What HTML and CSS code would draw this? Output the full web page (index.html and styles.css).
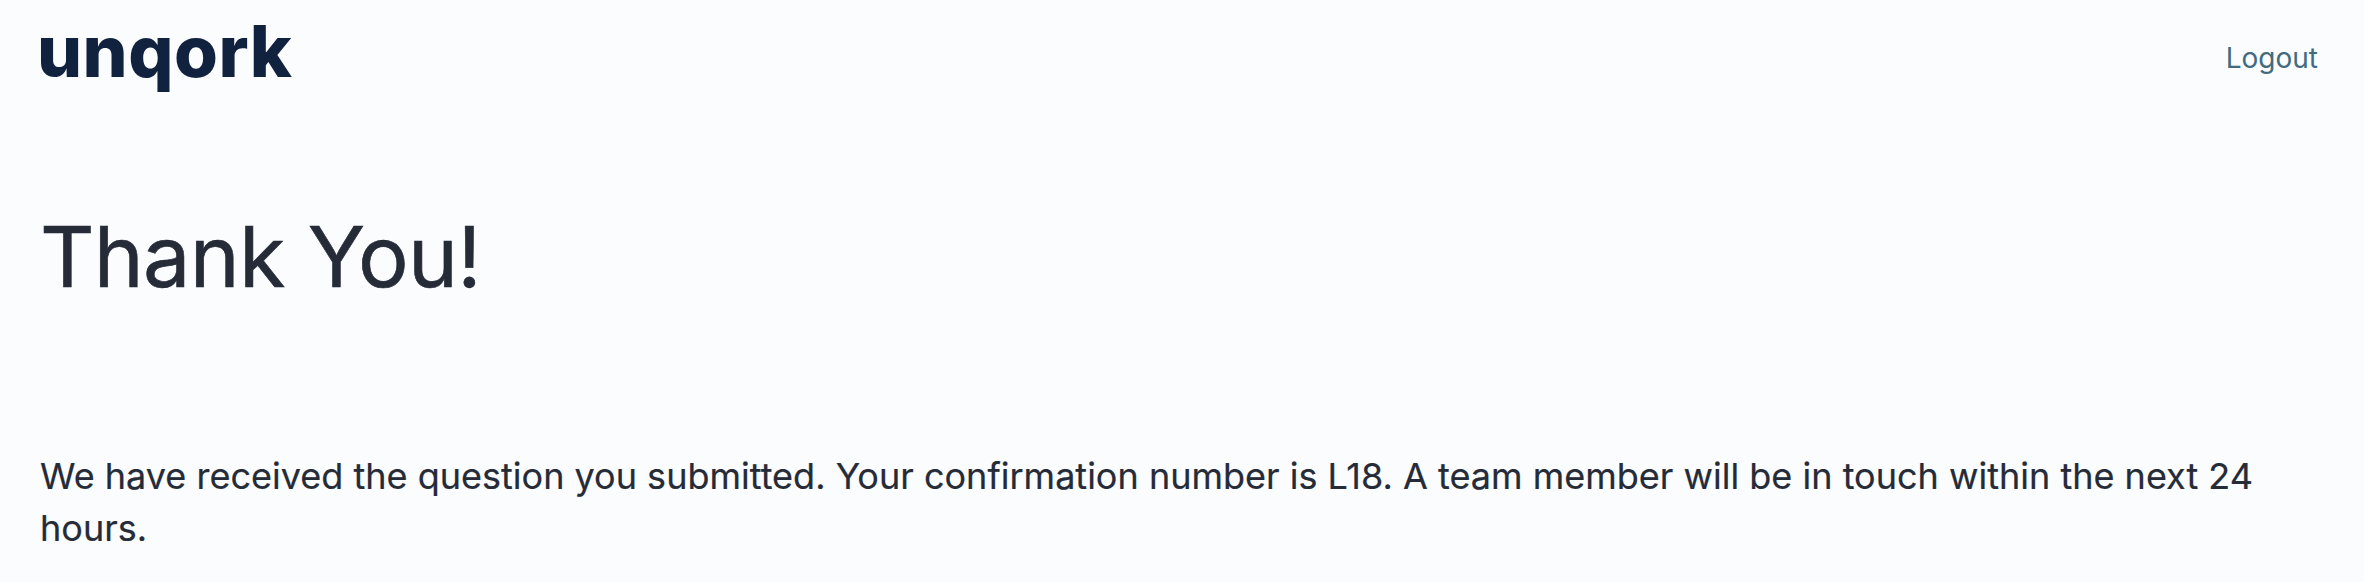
FILE: index.html
```html
<!DOCTYPE html>
<html lang="en">
<head>
<meta charset="utf-8">
<title>Thank You</title>
<link rel="stylesheet" href="styles.css">
</head>
<body>
<header class="header">
<span class="logo">unqork</span>
<a class="logout">Logout</a>
</header>
<main class="content">
<h1 class="title">Thank You!</h1>
<p class="message">We have received the question you submitted. Your confirmation number is L18. A team member will be in touch within the next 24 hours.</p>
</main>
</body>
</html>
```
FILE: styles.css
```css
body { margin: 0; background: #fafcfe; font-family: Inter, sans-serif; color: #262b38; }
.header { display: flex; justify-content: space-between; height: 116px; padding: 0 46px 0 37px; box-sizing: border-box; }
.logo { font-size: 71px; font-weight: 800; line-height: 102px; letter-spacing: 0.5px; color: #11223f; }
.logout { font-size: 28px; line-height: 116px; color: #426b80; }
.content { padding: 82px 40px 0; }
.title { margin: 0; font-size: 84.5px; font-weight: 400; line-height: 116px; letter-spacing: -0.7px; -webkit-text-stroke: 0.6px currentColor; }
.message { margin: 136px 0 0; font-size: 36px; line-height: 52px; letter-spacing: 0.01px; font-feature-settings: "calt" 0; -webkit-text-stroke: 0.2px currentColor; }
```
